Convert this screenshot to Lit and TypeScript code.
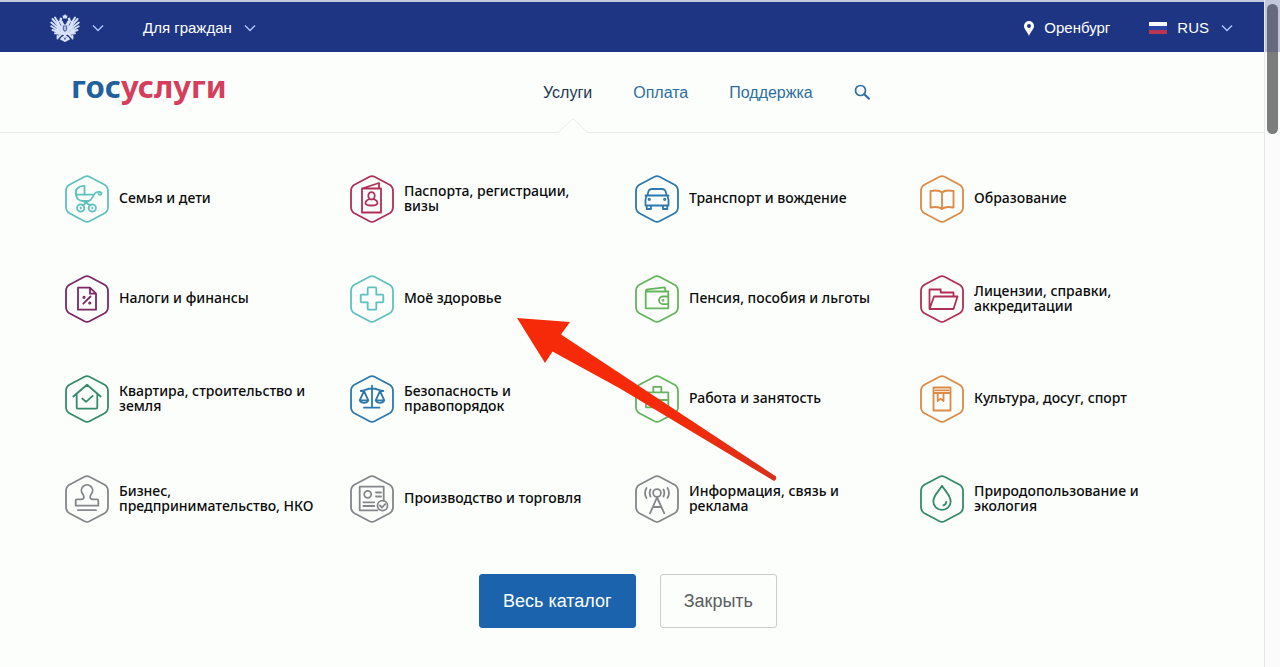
import { LitElement, html, css, svg } from "lit";
import { customElement } from "lit/decorators.js";

const HEXAGON =
  "M19.5 1.7Q22 .4 24.5 1.7L39.6 9.8Q43 11.9 43 16V32Q43 36.1 39.6 38.2L24.5 46.3Q22 47.6 19.5 46.3L4.4 38.2Q1 36.1 1 32V16Q1 11.9 4.4 9.8Z";

const glyphs = {
  family: svg`<path d="M19.500 11v8.700H11C9.600 14.500 13.500 10.600 19.500 11Z"/><path d="M11 19.700C11.600 23.700 14.500 26 18 26h5.500C27 26 28 19 31 17.500c2-1 5.500-1 5.500 1 0 1.500-2.500 1.700-3 .3M19.500 19.700h8.500M17.500 30.500l7-5M25.500 30.500l-7.500-4.500"/><circle cx="15.7" cy="33" r="3.600"/><circle cx="27.300" cy="33" r="3.600"/><path d="M15.700 32.500v1M27.300 32.500v1"/>`,
  passport: svg`<path d="M12 13.500h19v24H12ZM12 13.500l17-5.500v5.500"/><ellipse cx="21.500" cy="20.800" rx="3.200" ry="3.700"/><path d="M19.500 24c-2.600.9-4 2.400-4 4.300 0 1.600 2.700 2.200 6 2.200s6-.6 6-2.200c0-1.900-1.400-3.400-4-4.300"/>`,
  car: svg`<path d="M12.700 19.500c.5-4.500 1.500-5.500 5-5.500h8.600c3.500 0 4.500 1 5 5.500M10.500 20.500h23M12.700 19.500C11 21 10.500 22.500 10.500 25v5.500h23V25c0-2.500-.5-4-2.200-5.500M11.700 30.500v3.500h4.300v-3.500M28 30.500v3.500h4.300v-3.500"/><circle cx="14.300" cy="24.300" r=".7"/><circle cx="29.700" cy="24.300" r=".7"/>`,
  book: svg`<path d="M22 17.500c-2-2-7-2.300-11.500-1.500v16.500c4-.7 9.500-.5 11.500 1.500 2-2 7.500-2.200 11.500-1.500V16c-4.500-.8-9.500-.5-11.500 1.500ZM22 17.500V34"/>`,
  tax: svg`<path d="M13 12.700h12l6 6v16H13ZM25 12.700v6h6M18.300 28.700l7.200-7.200"/><circle cx="19" cy="22.300" r=".7"/><circle cx="24.800" cy="28" r=".7"/>`,
  health: svg`<path d="M17.700 13.300q0-1 1-1h6.600q1 0 1 1v6.400h6q1 0 1 1v5.600q0 1-1 1h-6v6.400q0 1-1 1h-6.600q-1 0-1-1v-6.400h-6q-1 0-1-1v-5.600q0-1 1-1h6Z"/>`,
  wallet: svg`<path d="M10.700 16.500h22.600V33.300H10.700ZM10.700 16.500c0-1.500.5-2 2-2.200l17-2 1 4.200M33.300 21.500h-5.500a3.800 3.800 0 0 0 0 7.600h5.500Z"/><circle cx="28" cy="25.300" r=".5"/>`,
  folder: svg`<path d="M9.500 34V14.500h11.200v3H33.500v4M9.500 34 14 21.500h23.500L33.500 34Z"/>`,
  house: svg`<path d="M8.300 21.500 22 9.800l13.700 11.700M11.700 19v13.500q0 1.200 1.200 1.200h18.200q1.200 0 1.200-1.200V19M17.300 23.500l3.700 3.300 6.700-6"/>`,
  scales: svg`<path d="M22 10.700v22M14 32.700h15.500M10.700 16c4-.3 6-2.500 11.300-2.500s7.300 2.200 11.300 2.500M14 16l-4.300 9.300M14 16l4.300 9.300M30 16l-4.300 9.300M30 16l4.300 9.300M9.700 25.300h8.600q-1 2.500-4.300 2.500t-4.300-2.500ZM25.700 25.300h8.600q-1 2.500-4.300 2.500t-4.300-2.500Z"/>`,
  briefcase: svg`<path d="M11 17.300h22.300v15H11ZM18.300 17.300v-5.500h8v5.500M11 25h22.300"/>`,
  leisure: svg`<path d="M13.500 12.500h17v23h-17ZM13.500 18h17M15.500 15.300h13M17.700 18v8l2.900-2.300 2.900 2.300v-8"/>`,
  stamp: svg`<path d="M10.700 30.700v-5.200q0-1.200 1.200-1.200h4.500q2.600 0 2.400-2.500 0-1.400-1.100-2.800a5.600 5.600 0 1 1 8.600 0q-1.100 1.400-1.100 2.800-.2 2.500 2.400 2.500h4.500q1.200 0 1.200 1.200v5.200ZM13 35.200h18"/>`,
  certificate: svg`<path d="M27.500 35.300H9.700V11.700h24V25.700M26 17.500h5M26 21.500h5M13.300 27.300h11M13.300 31h11M30 30.500l2 2 3.200-3.400"/><circle cx="17.700" cy="19.300" r="3.500"/><circle cx="32.500" cy="30.700" r="5"/>`,
  antenna: svg`<circle cx="22" cy="18" r="3.900"/><path d="M22 22.500 15 38.300M22 22.500l7.300 15.800M18 32h8M15.500 14.500q-1.700 3.500 0 7M28.500 14.500q1.700 3.500 0 7M11.500 13q-3 5 0 10M32.500 13q3 5 0 10"/>`,
  drop: svg`<path d="M22 10.700c3 5.300 8.700 10 8.700 15.500a8.700 8.600 0 0 1-17.400 0C13.300 20.700 19 16 22 10.700ZM26.300 27q-.5 2.700-3 3.300"/>`,
};

interface Category {
  title: string;
  tone: string;
  glyph: keyof typeof glyphs;
}

const categories: Category[] = [
  { title: "Семья и дети", tone: "aqua", glyph: "family" },
  { title: "Паспорта, регистрации, визы", tone: "crimson", glyph: "passport" },
  { title: "Транспорт и вождение", tone: "blue", glyph: "car" },
  { title: "Образование", tone: "orange", glyph: "book" },
  { title: "Налоги и финансы", tone: "plum", glyph: "tax" },
  { title: "Моё здоровье", tone: "aqua", glyph: "health" },
  { title: "Пенсия, пособия и льготы", tone: "green", glyph: "wallet" },
  { title: "Лицензии, справки, аккредитации", tone: "crimson", glyph: "folder" },
  { title: "Квартира, строительство и земля", tone: "emerald", glyph: "house" },
  { title: "Безопасность и правопорядок", tone: "blue", glyph: "scales" },
  { title: "Работа и занятость", tone: "green", glyph: "briefcase" },
  { title: "Культура, досуг, спорт", tone: "orange", glyph: "leisure" },
  { title: "Бизнес, предпринимательство, НКО", tone: "grey", glyph: "stamp" },
  { title: "Производство и торговля", tone: "grey", glyph: "certificate" },
  { title: "Информация, связь и реклама", tone: "grey", glyph: "antenna" },
  { title: "Природопользование и экология", tone: "emerald", glyph: "drop" },
];

const chevron = html`<svg class="chevron" viewBox="0 0 12 8" aria-hidden="true"><path d="M1 1.500l5 5 5-5" /></svg>`;

@customElement("top-bar")
export class TopBar extends LitElement {
  static styles = css`
    :host {
      display: flex;
      justify-content: space-between;
      align-items: center;
      height: 50px;
      padding: 0 31px 0 50px;
      border-top: 2px solid #c3c9df;
      background: #1d3583;
      color: #fff;
    }
    .group { display: flex; align-items: center; gap: 39px; }
    button {
      display: flex;
      align-items: center;
      gap: 12px;
      padding: 2px 0 0;
      border: 0;
      background: none;
      color: inherit;
      font: 15px/20px "Liberation Sans", Arial, sans-serif;
      white-space: nowrap;
    }
    .place, .language { gap: 10px; }
    .language .chevron { margin-left: 2px; }
    .emblem { width: 30px; height: 28px; fill: #d9e2fb; }
    .chevron { width: 12px; height: 8px; fill: none; stroke: #a9c4fb; stroke-width: 1.5; }
    .pin { width: 10px; height: 15px; fill: #fff; }
    .flag { width: 18px; height: 12px; }
  `;

  render() {
    return html`
      <div class="group">
        <button type="button" aria-label="Государственные порталы">
          <svg class="emblem" viewBox="0 0 30 28" aria-hidden="true">
            <path d="M15 0l1 1.500h1.500l-.6 3h-3.800l-.6-3H14ZM10 3.500l2.200.5-.2 2h-2.600ZM20 3.500l-2.200.5.2 2h2.600Z" />
            <path d="M9 6.500c2-1 4 0 4.300 2.300L15 11l1.700-2.200C17 6.500 19 5.500 21 6.500l1.300 1.300-2 .4-.6 2.300 1.300 3-2 6.500-4 2-4-2-2-6.500 1.300-3-.6-2.300-2-.4Z" />
            <path d="M10 11.500 5 3.500M9.500 13 2.500 5M9.300 15 1.200 8.500M9.300 17 1.300 12.200M10 18.500 2.500 16M11 20 5 19.300M20 11.500l5-8M20.500 13 27.500 5M20.700 15l8.100-6.500M20.700 17l8-4.800M20 18.500l7.500-2.500M19 20l6-.7" stroke="#d9e2fb" stroke-width="1.900" stroke-linecap="round" />
            <path d="M11.500 20 8 23.500M18.500 20l3.500 3.500M7.500 22v2.500M22.500 22v2.500M15 21v5.500" stroke="#d9e2fb" stroke-width="1.800" stroke-linecap="round" />
            <path d="M11 23.500l4-2.500 4 2.500 1 2-5 2.500-5-2.500Z" />
            <path d="M12.800 11.500h4.400v4.500L15 18l-2.200-2Z" fill="#5a70b5" />
            <path d="M14.300 12.500h1.400v3.500h-1.400Z" />
            <path d="M14 23.500l1 2 1-2M10 9.500l1 2M20 9.500l-1 2" stroke="#1d3583" fill="none" stroke-width=".7" />
          </svg>
          ${chevron}
        </button>
        <button type="button">Для граждан ${chevron}</button>
      </div>
      <div class="group">
        <button type="button" class="place">
          <svg class="pin" viewBox="0 0 10 15" aria-hidden="true">
            <path fill-rule="evenodd" d="M5 0a5 5 0 0 1 5 5c0 3.300-3.200 5.200-5 10C3.200 10.200 0 8.300 0 5a5 5 0 0 1 5-5Zm0 3a2 2 0 1 0 0 4 2 2 0 0 0 0-4Z" />
          </svg>
          Оренбург
        </button>
        <button type="button" class="language">
          <svg class="flag" viewBox="0 0 18 12" aria-hidden="true">
            <path fill="#fff" d="M0 0h18v4H0Z" />
            <path fill="#2a47a5" d="M0 4h18v4H0Z" />
            <path fill="#bd3650" d="M0 8h18v4H0Z" />
          </svg>
          RUS ${chevron}
        </button>
      </div>
    `;
  }
}

@customElement("site-header")
export class SiteHeader extends LitElement {
  static styles = css`
    :host {
      display: grid;
      grid-template-columns: 472px 1fr;
      align-items: center;
      height: 80px;
      padding-left: 71px;
      border-bottom: 1px solid #e9ecea;
    }
    .logo {
      color: #d63d5c;
      font: 700 31px/40px "Noto Sans", sans-serif;
      text-decoration: none;
      padding-bottom: 12px;
    }
    .state { color: #1f609d; }
    nav { display: flex; align-items: center; align-self: stretch; gap: 41px; }
    .link {
      display: flex;
      align-items: center;
      padding-top: 2px;
      color: #2d6e9f;
      font: 16px/20px "Liberation Sans", Arial, sans-serif;
      text-decoration: none;
    }
    .current { position: relative; align-self: stretch; color: #1d3553; }
    .pointer {
      position: absolute;
      left: 50%;
      bottom: -1px;
      width: 32px;
      height: 15px;
      margin-left: -11px;
      fill: #fcfefc;
      stroke: #e9ecea;
    }
    .search { display: flex; padding: 0; border: 0; background: none; }
    .lens { width: 16px; height: 16px; fill: none; stroke: #2d6e9f; stroke-width: 1.7; stroke-linecap: round; }
  `;

  render() {
    return html`
      <a class="logo" href="#"><span class="state">гос</span>услуги</a>
      <nav>
        <a class="link current" href="#">
          Услуги
          <svg class="pointer" viewBox="0 0 32 15" aria-hidden="true"><path d="M0 15.500 16 .7l16 14.800" /></svg>
        </a>
        <a class="link" href="#">Оплата</a>
        <a class="link" href="#">Поддержка</a>
        <button class="search" type="button" aria-label="Поиск">
          <svg class="lens" viewBox="0 0 16 16" aria-hidden="true"><circle cx="6.500" cy="6.500" r="5" /><path d="M10.300 10.300l4.500 4.200" stroke-width="2.200" /></svg>
        </button>
      </nav>
    `;
  }
}

@customElement("service-catalog")
export class ServiceCatalog extends LitElement {
  static styles = css`
    :host { display: block; padding: 42px 60px 38px 64px; }
    .grid {
      display: grid;
      grid-template-columns: repeat(4, minmax(0, 1fr));
      grid-auto-rows: 48px;
      row-gap: 52px;
      margin: 0;
      padding: 0;
      list-style: none;
    }
    .category {
      display: flex;
      align-items: center;
      gap: 10px;
      height: 48px;
      padding: 0 28px 0 1px;
      color: #0b0b0b;
      font: 500 14px/15px "Noto Sans", sans-serif;
      text-decoration: none;
    }
    .title { padding-bottom: 3px; }
    .badge {
      flex: none;
      width: 44px;
      height: 48px;
      fill: none;
      stroke: currentColor;
      stroke-width: 1.8;
      stroke-linejoin: round;
      stroke-linecap: round;
    }
    .aqua { color: #5fc1bd; }
    .crimson { color: #b02f56; }
    .blue { color: #2d78ad; }
    .orange { color: #dc8a45; }
    .plum { color: #7d2765; }
    .green { color: #65b35c; }
    .emerald { color: #368a6c; }
    .grey { color: #85868a; }
    .actions { display: flex; justify-content: center; align-items: center; gap: 24px; margin-top: 51px; padding-right: 12px; }
    button {
      height: 54px;
      padding: 0 23px;
      border: 1px solid #c9cccb;
      border-radius: 3px;
      background: #fcfefc;
      color: #5b5d5e;
      font: 18px/22px "Liberation Sans", Arial, sans-serif;
    }
    .primary { border-color: #1b63ad; background: #1b63ad; color: #fff; }
  `;

  render() {
    return html`
      <ul class="grid">
        ${categories.map(
          (item) => html`<li>
            <a class="category" href="#">
              <svg class="badge ${item.tone}" viewBox="0 0 44 48" aria-hidden="true">
                <path d=${HEXAGON} />
                ${glyphs[item.glyph]}
              </svg>
              <span class="title">${item.title}</span>
            </a>
          </li>`
        )}
      </ul>
      <div class="actions">
        <button type="button" class="primary">Весь каталог</button>
        <button type="button">Закрыть</button>
      </div>
    `;
  }
}

@customElement("app-root")
export class AppRoot extends LitElement {
  static styles = css`
    :host {
      position: relative;
      display: grid;
      grid-template-columns: 1fr 16px;
      min-height: 100vh;
      overflow: hidden;
      background: #fcfefc;
    }
    .rail {
      padding: 4px 2px 0;
      border-left: 1px solid #e6e8e7;
      background: linear-gradient(#c2c7da 52px, #fafbfa 52px);
      box-sizing: border-box;
    }
    .thumb { height: 130px; border-radius: 6px; background: linear-gradient(#666a7c 48px, #7b7c7c 48px); }
    .arrow { position: absolute; left: 516px; top: 316px; width: 264px; height: 168px; pointer-events: none; }
  `;

  render() {
    return html`
      <main>
        <top-bar></top-bar>
        <site-header></site-header>
        <service-catalog></service-catalog>
      </main>
      <div class="rail" aria-hidden="true"><div class="thumb"></div></div>
      <svg class="arrow" viewBox="516 316 264 168" aria-hidden="true">
        <defs>
          <linearGradient id="shaft" x1="0" y1="0" x2="1" y2="1">
            <stop offset=".6" stop-color="#f62a08" />
            <stop offset="1" stop-color="#d9301c" />
          </linearGradient>
        </defs>
        <path fill="url(#shaft)" d="M517 318l53 4-9 12.500L776 476.500q1 3-2 4.500L620 388.500 552.500 351.500 545 363Z" />
      </svg>
    `;
  }
}
